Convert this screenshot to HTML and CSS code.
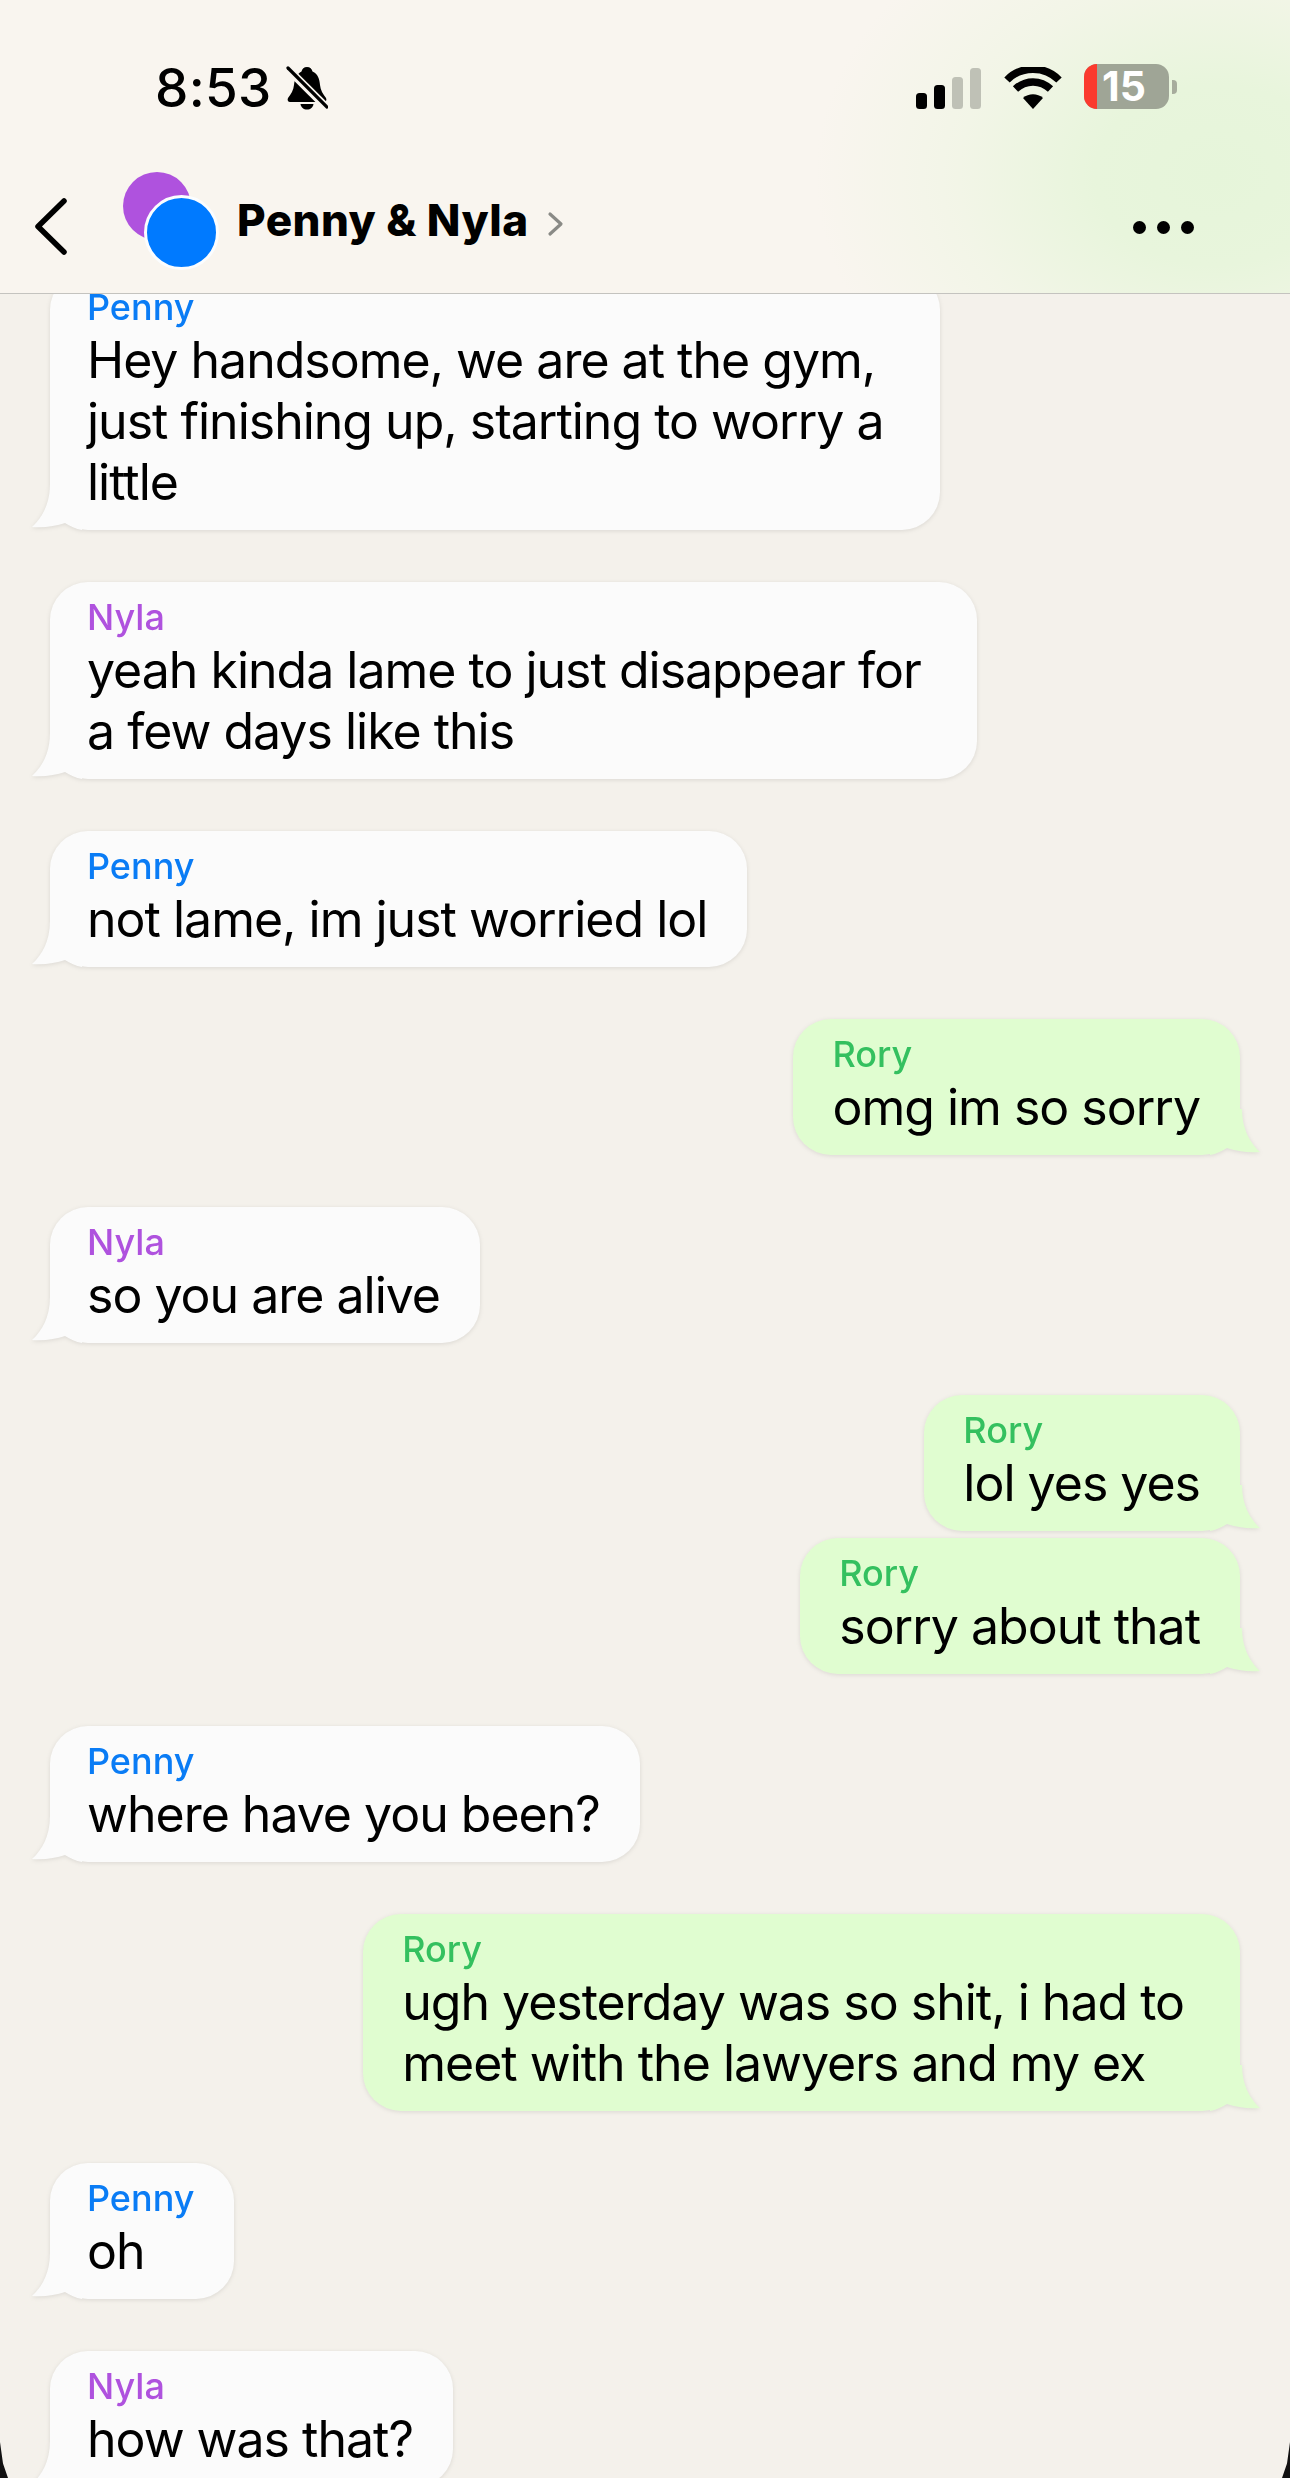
FILE: index.html
```html
<!DOCTYPE html>
<html lang="en">
<head>
<meta charset="utf-8">
<title>Penny &amp; Nyla</title>
<link rel="stylesheet" href="styles.css">
</head>
<body>
<div class="phone">
  <header class="header">
    <div class="status">
      <div class="status-left">
        <span class="time">8:53</span>
        <svg class="bell" viewBox="0 0 42 44" width="42" height="44" aria-hidden="true">
          <path d="M21 1c3 0 5 2 5.500 4.500C32 8 33.500 13 34 19c.4 5 3 9 6 13 1 2 0 4-2 4H4c-2 0-3-2-2-4 3-4 5.600-8 6-13 .5-6 3-11 7.500-13.500C16 3 18 1 21 1z" fill="#000"/>
          <path d="M14.500 38h13c-.5 3.500-3 5.500-6.500 5.500S15 41.500 14.500 38z" fill="#000"/>
          <path d="M2 3l38 38" stroke="#f9f5ef" stroke-width="8"/>
          <path d="M2 2l39 39" stroke="#000" stroke-width="3.200" stroke-linecap="round"/>
        </svg>
      </div>
      <div class="status-right">
        <svg class="signal" viewBox="0 0 65 41" width="65" height="41" aria-hidden="true">
          <rect x="0" y="25" width="11" height="16" rx="3.500" fill="#000"/>
          <rect x="18" y="17" width="11" height="24" rx="3.500" fill="#000"/>
          <rect x="36" y="9" width="11" height="32" rx="3.500" fill="#bfc1b6"/>
          <rect x="54" y="0" width="11" height="41" rx="3.500" fill="#bfc1b6"/>
        </svg>
        <svg class="wifi" viewBox="0 0 58 42" width="58" height="42" aria-hidden="true">
          <path d="M29 42l-10-11c5.500-5 14.500-5 20 0z" fill="#000"/>
          <path d="M11.500 22c10-9.500 25-9.500 35 0" fill="none" stroke="#000" stroke-width="7.500"/>
          <path d="M3 13C17-1.500 41-1.500 55 13" fill="none" stroke="#000" stroke-width="7.500"/>
        </svg>
        <div class="battery">
          <div class="battery-body"><span class="battery-red"></span><span class="battery-num">15</span></div>
          <span class="battery-nub"></span>
        </div>
      </div>
    </div>
    <nav class="nav">
      <svg class="back" viewBox="0 0 33 57" width="33" height="57" aria-hidden="true">
        <path d="M30 3L4 28.500 30 54" fill="none" stroke="#000" stroke-width="5.500" stroke-linecap="round" stroke-linejoin="round"/>
      </svg>
      <div class="avatars">
        <span class="avatar avatar-nyla"></span>
        <span class="avatar avatar-penny"></span>
      </div>
      <div class="title">Penny &amp; Nyla</div>
      <svg class="chev" viewBox="0 0 18 26" width="18" height="26" aria-hidden="true">
        <path d="M3 3l11 10L3 23" fill="none" stroke="#8a8a86" stroke-width="3.200" stroke-linecap="round" stroke-linejoin="round"/>
      </svg>
      <div class="more"><span class="dot"></span><span class="dot"></span><span class="dot"></span></div>
    </nav>
  </header>
  <main class="chat">
    <div class="list">
      <div class="msg in wrapped"><div class="name penny">Penny</div><div class="text">Hey handsome, we are at the gym,<br>just finishing up, starting to worry a<br>little</div></div>
      <div class="msg in wrapped"><div class="name nyla">Nyla</div><div class="text">yeah kinda lame to just disappear for<br>a few days like this</div></div>
      <div class="msg in"><div class="name penny">Penny</div><div class="text">not lame, im just worried lol</div></div>
      <div class="msg out"><div class="name rory">Rory</div><div class="text">omg im so sorry</div></div>
      <div class="msg in"><div class="name nyla">Nyla</div><div class="text">so you are alive</div></div>
      <div class="msg out cont"><div class="name rory">Rory</div><div class="text">lol yes yes</div></div>
      <div class="msg out"><div class="name rory">Rory</div><div class="text">sorry about that</div></div>
      <div class="msg in"><div class="name penny">Penny</div><div class="text">where have you been?</div></div>
      <div class="msg out wrapped"><div class="name rory">Rory</div><div class="text">ugh yesterday was so shit, i had to<br>meet with the lawyers and my ex</div></div>
      <div class="msg in"><div class="name penny">Penny</div><div class="text">oh</div></div>
      <div class="msg in"><div class="name nyla">Nyla</div><div class="text">how was that?</div></div>
    </div>
  </main>
</div>
</body>
</html>
```
FILE: styles.css
```css
* { box-sizing: border-box; }
html, body { margin: 0; padding: 0; }
body { background: #f4f1eb; font-family: Inter, "Liberation Sans", sans-serif; color: #000; }

.phone {
  width: 1290px;
  height: 2478px;
  overflow: hidden;
  position: relative;
  display: flex;
  flex-direction: column;
  background: #f4f1eb;
}
.phone::before, .phone::after {
  content: "";
  position: absolute;
  bottom: 0;
  width: 8px;
  height: 36px;
  background: #111;
}
.phone::before { left: 0; clip-path: polygon(0 0, 3px 60%, 8px 100%, 0 100%); }
.phone::after { right: 0; clip-path: polygon(100% 0, 5px 60%, 0 100%, 100% 100%); }

.header {
  height: 294px;
  flex: none;
  position: relative;
  z-index: 2;
  border-bottom: 1px solid #c4c3bf;
  background:
    radial-gradient(ellipse 400px 300px at 1215px 175px, #e6f5da 0%, #e8f5dc 30%, rgba(238,245,226,.6) 65%, rgba(249,245,239,0) 100%),
    #f9f5ef;
}
.status {
  height: 130px;
  padding: 38px 113px 0 155px;
  display: flex;
  justify-content: space-between;
  align-items: flex-start;
}
.status-left { display: flex; align-items: center; gap: 14px; height: 44px; margin-top: 28px; }
.time { font-size: 53px; font-weight: 500; line-height: 44px; letter-spacing: 0.3px; }
.status-right { display: flex; align-items: flex-end; margin-top: 26px; height: 45px; }
.signal { margin-right: 23px; display: block; }
.wifi { margin-right: 22px; display: block; }
.battery { display: flex; align-items: center; height: 45px; }
.battery-body {
  width: 85px;
  height: 45px;
  border-radius: 13px;
  background: #9fa596;
  display: flex;
  align-items: center;
}
.battery-red { width: 13px; height: 45px; background: #fb3a2e; flex: none; border-radius: 13px 0 0 13px; }
.battery-num { color: #fff; font-size: 41px; font-weight: 700; line-height: 45px; margin-left: 5px; }
.battery-nub { width: 5px; height: 14px; margin-left: 3px; border-radius: 0 4px 4px 0; background: #a7ac9d; }

.nav {
  height: 163px;
  padding: 0 96px 0 34px;
  display: flex;
  align-items: center;
}
.back { flex: none; display: block; margin-top: 30px; }
.avatars { width: 96px; height: 98px; position: relative; margin-left: 56px; flex: none; margin-top: 18px; }
.avatar { position: absolute; border-radius: 50%; display: block; }
.avatar-nyla { left: 0; top: 0; width: 68px; height: 68px; background: #af52de; }
.avatar-penny { left: 21px; top: 23px; width: 75px; height: 75px; background: #007aff; border: 3px solid #fbfdff; }
.title { font-size: 44px; font-weight: 800; margin-left: 18px; line-height: 60px; letter-spacing: 0.45px; margin-top: 16px; white-space: nowrap; }
.chev { margin-left: 18px; display: block; flex: none; margin-top: 24px; }
.more { margin-left: auto; display: flex; gap: 11px; margin-top: 32px; }
.dot { width: 13px; height: 13px; border-radius: 50%; background: #000; display: block; }

.chat { flex: 1; overflow: hidden; min-height: 0; }
.list { display: flex; flex-direction: column; padding: 0 50px; margin-top: -22px; }

.msg {
  position: relative;
  width: fit-content;
  padding: 13px 40px 17px 37px;
  border-radius: 38px;
  margin-bottom: 52px;
  filter: drop-shadow(0 1px 2px rgba(0,0,0,.1));
}
.msg.cont { margin-bottom: 7px; }
.msg.wrapped { padding-right: 56px; }
.msg::after {
  content: "";
  position: absolute;
  bottom: 0;
  width: 50px;
  height: 46px;
  clip-path: path("M18 0C18 20 10 34 0 43C12 44 24 42 33 39C38 42 44 45 50 46L50 0Z");
}
.in { background: #fbfbfb; align-self: flex-start; }
.in::after { left: -18px; background: #fbfbfb; }
.out { background: #e0fdd0; align-self: flex-end; padding-left: 39px; }
.out::after { right: -20px; background: #e0fdd0; transform: scaleX(-1); }

.name { font-size: 36px; line-height: 45px; font-weight: 500; position: relative; z-index: 1; }
.penny { color: #0a7cf5; }
.nyla { color: #af52de; }
.rory { color: #34c05f; }
.text { font-size: 50px; line-height: 61px; letter-spacing: -1px; white-space: nowrap; position: relative; z-index: 1; }
```
